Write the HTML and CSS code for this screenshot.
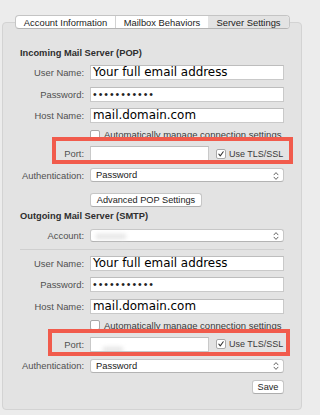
FILE: index.html
```html
<!DOCTYPE html>
<html>
<head>
<meta charset="utf-8">
<link rel="stylesheet" href="styles.css">
</head>
<body>
<div class="window">
  <div class="tabs">
    <div class="tab tab-first">Account Information</div>
    <div class="tab tab-mid">Mailbox Behaviors</div>
    <div class="tab tab-active">Server Settings</div>
  </div>
  <div class="panel">
    <div class="section-title">Incoming Mail Server (POP)</div>
    <div class="form">
      <div class="row">
        <span class="lbl">User Name:</span>
        <div class="field big">Your full email address</div>
      </div>
      <div class="row">
        <span class="lbl">Password:</span>
        <div class="field dots">•••••••••••</div>
      </div>
      <div class="row">
        <span class="lbl">Host Name:</span>
        <div class="field big">mail.domain.com</div>
      </div>
      <div class="row row-check">
        <span></span>
        <div class="check-line"><span class="checkbox"></span><span class="check-text">Automatically manage connection settings</span></div>
      </div>
      <div class="row">
        <span class="lbl">Port:</span>
        <div class="port-line">
          <div class="field port-field"></div>
          <span class="checkbox checked"><svg viewBox="0 0 10 10" width="10" height="10"><path d="M2.3 5.2 L4.1 7.3 L7.8 2.2" fill="none" stroke="#333" stroke-width="1.3" stroke-linecap="round" stroke-linejoin="round"/></svg></span>
          <span class="tls">Use TLS/SSL</span>
        </div>
        <div class="annot annot-a"></div>
      </div>
      <div class="row">
        <span class="lbl">Authentication:</span>
        <div class="select">Password<svg class="stepper" viewBox="0 0 6 10" width="6" height="10"><path d="M1 3.8 L3 1.6 L5 3.8 M1 6.2 L3 8.4 L5 6.2" fill="none" stroke="#555" stroke-width="0.9" stroke-linecap="round" stroke-linejoin="round"/></svg></div>
      </div>
      <div class="row row-btn">
        <span></span>
        <div><span class="button adv">Advanced POP Settings</span></div>
      </div>
    </div>

    <div class="section-title second">Outgoing Mail Server (SMTP)</div>
    <div class="form">
      <div class="row row-account">
        <span class="lbl">Account:</span>
        <div class="select select-account"><span class="blur"></span><svg class="stepper" viewBox="0 0 6 10" width="6" height="10"><path d="M1 3.8 L3 1.6 L5 3.8 M1 6.2 L3 8.4 L5 6.2" fill="none" stroke="#555" stroke-width="0.9" stroke-linecap="round" stroke-linejoin="round"/></svg></div>
      </div>
      <div class="separator"></div>
      <div class="row">
        <span class="lbl">User Name:</span>
        <div class="field big">Your full email address</div>
      </div>
      <div class="row">
        <span class="lbl">Password:</span>
        <div class="field dots">•••••••••••</div>
      </div>
      <div class="row">
        <span class="lbl">Host Name:</span>
        <div class="field big">mail.domain.com</div>
      </div>
      <div class="row row-check">
        <span></span>
        <div class="check-line"><span class="checkbox"></span><span class="check-text">Automatically manage connection settings</span></div>
      </div>
      <div class="row">
        <span class="lbl">Port:</span>
        <div class="port-line">
          <div class="field port-field"><span class="blur blur-small"></span></div>
          <span class="checkbox checked"><svg viewBox="0 0 10 10" width="10" height="10"><path d="M2.3 5.2 L4.1 7.3 L7.8 2.2" fill="none" stroke="#333" stroke-width="1.3" stroke-linecap="round" stroke-linejoin="round"/></svg></span>
          <span class="tls">Use TLS/SSL</span>
        </div>
        <div class="annot annot-b"></div>
      </div>
      <div class="row">
        <span class="lbl">Authentication:</span>
        <div class="select">Password<svg class="stepper" viewBox="0 0 6 10" width="6" height="10"><path d="M1 3.8 L3 1.6 L5 3.8 M1 6.2 L3 8.4 L5 6.2" fill="none" stroke="#555" stroke-width="0.9" stroke-linecap="round" stroke-linejoin="round"/></svg></div>
      </div>
      <div class="row row-btn">
        <span></span>
        <div class="save-wrap"><span class="button save">Save</span></div>
      </div>
    </div>
  </div>
</div>
</body>
</html>
```

FILE: styles.css
```css
* { box-sizing: border-box; }
html, body {
  margin: 0;
  padding: 0;
  background: #ececec;
  width: 311px;
  height: 415px;
  overflow: hidden;
  font-family: "Liberation Sans", Arial, sans-serif;
}
.window {
  padding: 15px 0 0 2px;
}
.tabs {
  position: relative;
  z-index: 1;
  display: flex;
  margin-left: 13px;
  width: 275px;
  height: 14px;
  border: 1px solid #c4c4c4;
  border-bottom-color: #b4b4b4;
  border-radius: 4px;
  background: #fff;
  overflow: hidden;
  font-size: 9.4px;
  color: #1c1c1c;
}
.tab {
  display: flex;
  align-items: center;
  justify-content: center;
  height: 100%;
}
.tab-first { width: 100px; border-right: 1px solid #d2d2d2; }
.tab-mid { width: 92px; }
.tab-active { flex: 1; background: #e3e3e3; }
.panel {
  margin-top: -7px;
  width: 300px;
  height: 388px;
  border: 1px solid #d3d3d3;
  border-radius: 4px;
  background: #e3e3e3;
  padding: 24px 0 0 17px;
}
.section-title {
  font-weight: bold;
  font-size: 9.3px;
  line-height: 12px;
  height: 12px;
  color: #2e2e2e;
  margin-bottom: 6px;
}
.section-title.second {
  margin-top: 7px;
  margin-bottom: 7px;
}
.form {
  display: flex;
  flex-direction: column;
  gap: 6.5px;
  width: 264px;
}
.row {
  position: relative;
  display: grid;
  grid-template-columns: 64px 194px;
  column-gap: 6px;
  align-items: center;
  height: 15px;
}
.row-check { height: 10px; }
.row-btn { height: 14px; }
.row-account { height: 13px; }
.lbl {
  text-align: right;
  font-size: 9.4px;
  color: #505050;
  white-space: nowrap;
}
.field {
  height: 15px;
  background: #fff;
  border: 1px solid #c9c9c9;
  border-top-color: #bdbdbd;
  padding-left: 2px;
  white-space: nowrap;
  overflow: hidden;
}
.big {
  font-family: "DejaVu Sans", Verdana, sans-serif;
  font-size: 11.9px;
  line-height: 13px;
  color: #000;
}
.dots {
  font-size: 10.5px;
  line-height: 13px;
  letter-spacing: 1.95px;
  color: #222;
  padding-left: 2px;
}
.check-line {
  display: flex;
  align-items: center;
  height: 10px;
}
.checkbox {
  display: inline-flex;
  align-items: center;
  justify-content: center;
  width: 10px;
  height: 10px;
  background: #fff;
  border: 1px solid #a9a9a9;
  border-radius: 2px;
  flex: none;
}
.checkbox svg { display: block; }
.check-text {
  margin-left: 4px;
  font-size: 9.5px;
  color: #3a3a3a;
  white-space: nowrap;
}
.port-line {
  display: flex;
  align-items: center;
  height: 15px;
}
.port-field {
  width: 119px;
  flex: none;
  margin-right: 7px;
  position: relative;
}
.tls {
  margin-left: 3px;
  font-size: 9px;
  color: #3a3a3a;
  white-space: nowrap;
}
.select {
  position: relative;
  height: 14px;
  background: #fff;
  border: 1px solid #c7c7c7;
  border-bottom-color: #b3b3b3;
  border-radius: 3px;
  padding-left: 5px;
  font-size: 9.4px;
  line-height: 12px;
  color: #202020;
}
.select-account { height: 13px; }
.stepper {
  position: absolute;
  right: 4px;
  top: 1.5px;
}
.select-account .stepper { top: 1px; }
.blur {
  display: inline-block;
  width: 30px;
  height: 5px;
  margin-top: 3px;
  background: #e4e4e4;
  filter: blur(2px);
}
.blur-small {
  width: 20px;
  margin-left: 10px;
  margin-top: 4px;
}
.button {
  display: inline-flex;
  align-items: center;
  justify-content: center;
  height: 14px;
  background: #fff;
  border: 1px solid #c6c6c6;
  border-bottom-color: #adadad;
  border-radius: 3px;
  font-size: 9.2px;
  color: #222;
  white-space: nowrap;
}
.adv { width: 112px; }
.save-wrap { display: flex; justify-content: flex-end; }
.save { width: 32px; }
.separator {
  height: 1px;
  background: #cfcfcf;
  margin: 0.5px 0 -1px 0;
}
.annot {
  position: absolute;
  border: 4px solid #f15b4c;
  pointer-events: none;
  z-index: 2;
}
.annot-a { left: 32px; right: -9px; top: -9px; bottom: -3px; }
.annot-b { left: 28px; right: -6px; top: -8px; bottom: -4px; }
```
